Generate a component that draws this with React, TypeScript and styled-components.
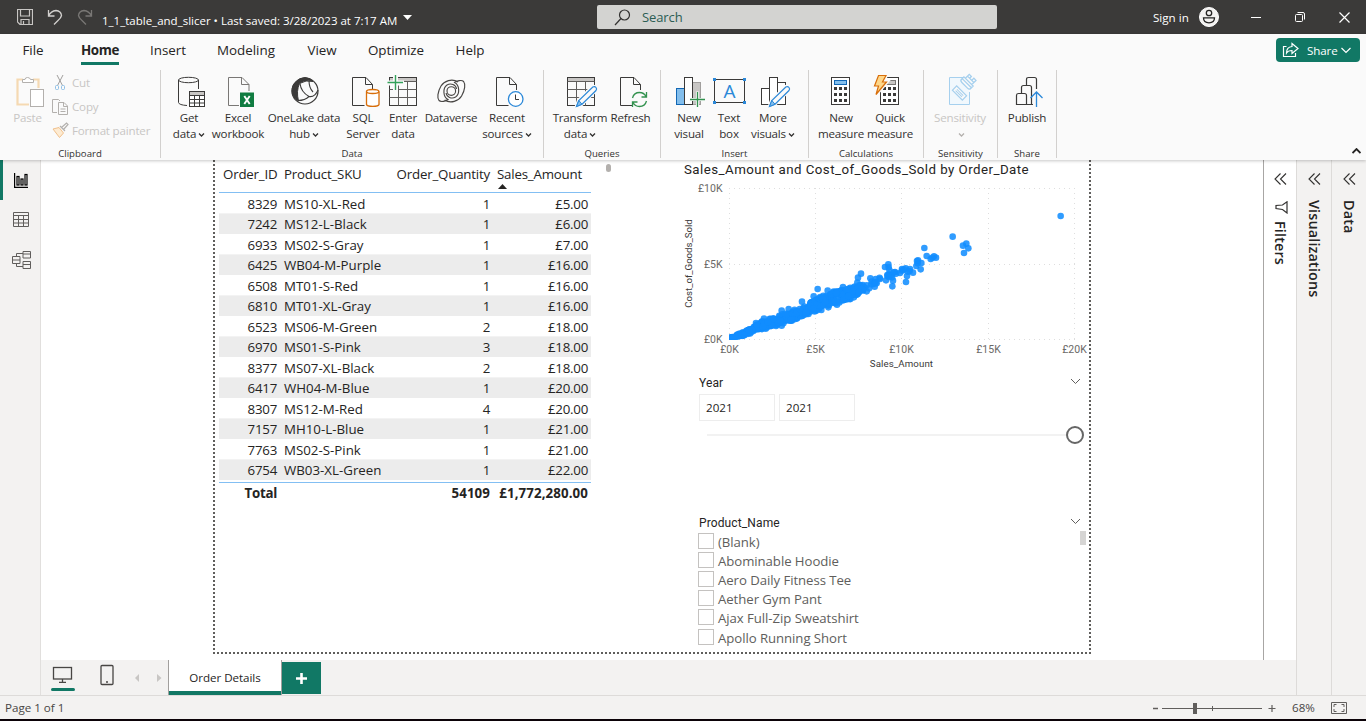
import React from "react";
import styled, { createGlobalStyle } from "styled-components";

const GlobalStyle = createGlobalStyle`
  * { box-sizing: border-box; }
  body { margin: 0; background: #fff; font-family: "Open Sans", "Noto Sans", sans-serif; color: #252423; overflow: hidden; }
`;

const green = "#117865";
const ink = "#3b3a39";

const Window = styled.div`
  display: flex;
  flex-direction: column;
  width: 1366px;
  height: 721px;
  border-bottom: 2px solid #0b0208;
  overflow: hidden;
`;

/* ---------- title bar ---------- */

const TitleBar = styled.header`
  display: flex;
  align-items: center;
  flex: none;
  height: 34px;
  background: #3b3a39;
  color: #fff;
`;

const QuickAccess = styled.div`
  display: flex;
  align-items: center;
  width: 597px;
  padding-left: 17px;
`;

const QuickIcon = styled.svg<{ $gap: number }>`
  width: 16px;
  height: 16px;
  margin-right: ${(p) => p.$gap}px;
  fill: none;
  flex: none;
`;

const FileName = styled.span`
  font-size: 11.5px;
  letter-spacing: 0;
  white-space: pre;
  padding-top: 6px;
`;

const CaretDown = styled.svg`
  width: 9px;
  height: 5px;
  margin-left: 6px;
  fill: #fff;
`;

const SearchBox = styled.div`
  display: flex;
  align-items: center;
  width: 400px;
  height: 24px;
  padding-left: 17px;
  border-radius: 2px;
  background: #d3d3d1;
  color: #2b5d54;
  font-size: 13px;
  letter-spacing: -0.1px;
  gap: 11px;
`;

const WindowControls = styled.div`
  display: flex;
  align-items: center;
  margin-left: 156px;
  font-size: 11.6px;
`;

const ControlIcon = styled.svg<{ $w: number; $ml: number }>`
  width: ${(p) => p.$w}px;
  height: ${(p) => p.$w}px;
  margin-left: ${(p) => p.$ml}px;
  fill: none;
  stroke: #fff;
`;

/* ---------- ribbon ---------- */

const Ribbon = styled.section`
  position: relative;
  z-index: 2;
  flex: none;
  height: 126px;
  background: #fafafa;
  box-shadow: 0 1px 3px rgba(0, 0, 0, 0.22);
`;

const TabRow = styled.nav`
  display: flex;
  height: 36px;
  padding-left: 22px;
`;

const RibbonTab = styled.div<{ $w: number; $active?: boolean }>`
  display: flex;
  justify-content: center;
  width: ${(p) => p.$w}px;
  font-size: 13.4px;
  line-height: 32px;
  font-weight: ${(p) => (p.$active ? 700 : 400)};
  letter-spacing: ${(p) => (p.$active ? "-0.35px" : "-0.03px")};

  span {
    height: 31px;
    border-bottom: ${(p) => (p.$active ? `3px solid ${green}` : "none")};
  }
`;

const ShareButton = styled.button`
  display: flex;
  align-items: center;
  width: 84px;
  height: 24px;
  margin: 4px 6px 0 auto;
  padding: 0 0 0 6px;
  border: 0;
  border-radius: 4px;
  background: ${green};
  color: #fff;
  font: 11.6px "Open Sans", sans-serif;
  letter-spacing: -0.1px;

  span { margin: 0 3px 0 6px; }
`;

const Groups = styled.div`
  display: flex;
  height: 88px;
`;

const Group = styled.div<{ $w: number }>`
  display: flex;
  flex-direction: column;
  align-items: center;
  width: ${(p) => p.$w}px;
  border-right: 1px solid #d2d0ce;
`;

const GroupItems = styled.div<{ $pad?: number }>`
  display: flex;
  flex: none;
  align-self: stretch;
  height: 77px;
  padding-left: ${(p) => p.$pad ?? 0}px;
`;

const GroupLabel = styled.div`
  flex: none;
  font-size: 9.6px;
  line-height: 13px;
  color: #323130;
`;

const BigButton = styled.div<{ $w: number; $muted?: boolean }>`
  display: flex;
  flex-direction: column;
  align-items: center;
  flex: none;
  width: ${(p) => p.$w}px;
  padding-top: 4px;
  font-size: 11.6px;
  line-height: 16px;
  letter-spacing: -0.2px;
  white-space: nowrap;
  color: ${(p) => (p.$muted ? "#c8c6c4" : "#323130")};
`;

const BigIcon = styled.svg`
  width: 34px;
  height: 36px;
  flex: none;
  fill: none;
  stroke: ${ink};
  overflow: visible;
`;

const MenuLine = styled.div`
  svg { margin-left: 2px; }
`;

const SmallStack = styled.div`
  display: flex;
  flex-direction: column;
`;

const SmallButton = styled.div`
  display: flex;
  align-items: center;
  gap: 3px;
  height: 24px;
  font-size: 11.6px;
  color: #c8c6c4;
  letter-spacing: -0.2px;
  white-space: nowrap;

  svg { width: 17px; height: 17px; fill: none; }
`;

const CollapseRibbon = styled.svg`
  position: absolute;
  right: 5px;
  bottom: 6px;
  width: 9px;
  height: 6px;
  fill: none;
  stroke: #252423;
  stroke-width: 1.8;
`;

/* ---------- body ---------- */

const Body = styled.div`
  display: flex;
  flex: 1;
  min-height: 0;
`;

const Rail = styled.aside`
  display: flex;
  flex-direction: column;
  width: 41px;
  background: #f3f2f1;
  border-right: 1px solid #e1dfdd;
`;

const RailItem = styled.div<{ $active?: boolean }>`
  display: flex;
  align-items: center;
  justify-content: center;
  height: 40px;
  border-left: 3px solid ${(p) => (p.$active ? green : "transparent")};
  padding: ${(p) => (p.$active ? "1px 1px 0 0" : "0 1px 1px 0")};
`;

const Center = styled.div`
  display: flex;
  flex-direction: column;
  width: 1255px;
`;

const Workspace = styled.div`
  display: flex;
  height: 500px;
`;

const CanvasArea = styled.div`
  width: 1222px;
  padding-left: 172px;
`;

const ReportPage = styled.main`
  display: flex;
  width: 878px;
  height: 494px;
  border: 2px dotted #605e5c;
  border-top: 0;
`;

const TableVisual = styled.div`
  display: flex;
  width: 465px;
  padding-left: 4px;
`;

const Table = styled.div`
  width: 372px;
  font-size: 13.3px;
`;

const rowHeight = { head: "33px", total: "22px", alt: "20.5px" };
const rowLine = { head: "29px", total: "20px", alt: "20px" };

const TableRow = styled.div<{ $kind?: "head" | "total" | "alt" }>`
  display: grid;
  grid-template-columns: 61px 114px 99px 98px;
  height: ${(p) => (p.$kind ? rowHeight[p.$kind] : "20.5px")};
  line-height: ${(p) => (p.$kind ? rowLine[p.$kind] : "22px")};
  background: ${(p) => (p.$kind === "alt" ? "#ececec" : "none")};
  box-shadow: ${(p) => (p.$kind === "alt" ? "0 -1px 0 #f3f3f3" : "none")};
  font-weight: ${(p) => (p.$kind === "total" ? 700 : 400)};
  letter-spacing: ${(p) => (p.$kind === "total" ? "0.1px" : p.$kind === "head" ? "-0.2px" : "0")};
  border-bottom: ${(p) => (p.$kind === "head" ? "1px solid #83bff3" : "0")};
  border-top: ${(p) => (p.$kind === "total" ? "1px solid #83bff3" : "0")};
  margin-top: ${(p) => (p.$kind === "total" ? "2px" : "0")};
`;

const Cell = styled.div<{ $right?: boolean; $tight?: boolean }>`
  position: relative;
  padding: 0 3px 0 4px;
  display: flex;
  justify-content: ${(p) => (p.$right ? "flex-end" : "flex-start")};
  white-space: nowrap;
  ${(p) => p.$tight && "letter-spacing: -0.25px;"}
`;

const SortMark = styled.svg`
  position: absolute;
  left: 5px;
  top: 24px;
  width: 9px;
  height: 5px;
  fill: #252423;
`;

const TableThumb = styled.div`
  width: 5px;
  height: 8px;
  margin: 4px 0 0 15px;
  border-radius: 3px;
  background: #b3b0ad;
`;

const RightVisuals = styled.div`
  display: flex;
  flex-direction: column;
  width: 409px;
`;

const ChartTitle = styled.h2`
  margin: 0;
  height: 18px;
  padding-left: 4px;
  font: 400 13.3px/20px Roboto, sans-serif;
  letter-spacing: 0.46px;
  white-space: nowrap;
  color: #252423;
`;

const Scatter = styled.svg`
  display: block;
  width: 409px;
  height: 192px;
  overflow: visible;

  text { font-family: Roboto, sans-serif; font-size: 10.5px; fill: #6b6967; }
  .axis { font-size: 9.7px; fill: #3b3a39; letter-spacing: 0.1px; }
  .axis.vertical { letter-spacing: -0.05px; }
`;

const Slicer = styled.section<{ $h: number }>`
  height: ${(p) => p.$h}px;
  padding: 5px 8px 0 19px;
`;

const SlicerHead = styled.div`
  display: flex;
  align-items: center;
  justify-content: space-between;
  height: 16px;
  font: 400 12px/16px Roboto, sans-serif;
  letter-spacing: 0.12px;
  color: #252423;

  svg { margin-bottom: 3px; }
`;

const YearInputs = styled.div`
  display: flex;
  gap: 4px;
  margin: 3px 0 0 0;
`;

const YearInput = styled.div`
  width: 76px;
  height: 27px;
  padding-left: 6px;
  border: 1px solid #ededed;
  font-size: 11.6px;
  line-height: 25px;
`;

const SliderTrack = styled.div`
  display: flex;
  align-items: center;
  height: 19px;
  margin: 4px -3px 0 8px;

  i { flex: 1; height: 2px; background: #f2f2f2; }
  b { width: 18px; height: 18px; border: 2px solid #666; border-radius: 50%; background: #fff; }
`;

const ItemList = styled.div`
  display: flex;
  justify-content: space-between;
  margin-right: -5px;
`;

const ListItem = styled.div`
  display: flex;
  align-items: center;
  gap: 4px;
  height: 19.2px;
  margin: 1px 0 -1px -1px;
  font-size: 13.2px;
  line-height: 22px;
  letter-spacing: -0.06px;
  color: #605e5c;
  white-space: nowrap;

  &::before { content: ""; width: 14px; height: 14px; border: 1px solid #c4c2c0; margin-bottom: 2px; }
`;

const ListThumb = styled.div`
  width: 6px;
  height: 14px;
  background: #d6d5d4;
`;

const SidePane = styled.div<{ $w: number; $white?: boolean }>`
  display: flex;
  flex-direction: column;
  align-items: center;
  width: ${(p) => p.$w}px;
  padding-top: 13px;
  background: ${(p) => (p.$white ? "#fff" : "#f3f2f1")};
  border-left: 1px solid ${(p) => (p.$white ? "#a8a6a4" : "#dddbd9")};
`;

const VerticalTitle = styled.div<{ $mt: number }>`
  writing-mode: vertical-rl;
  margin: ${(p) => p.$mt}px 1px 0 0;
  font-size: 14.4px;
  font-weight: 600;
  line-height: 18px;
  letter-spacing: 0.15px;
`;

const FilterIcon = styled.svg`
  width: 13px;
  height: 13px;
  flex: none;
  margin: 16px 0 0 3px;
  fill: none;
  stroke: #323130;
  stroke-width: 1.2;
`;

const PageBar = styled.div`
  display: flex;
  height: 35px;
  background: #f3f2f1;
`;

const ViewSwitch = styled.div`
  display: flex;
  width: 127px;
`;

const PageTab = styled.div`
  width: 114px;
  height: 35px;
  border: solid #a19f9d;
  border-width: 0 1px;
  background: #fff;
  box-shadow: inset 0 -4px 0 ${green};
  text-align: center;
  font-size: 11.6px;
  line-height: 35px;
  letter-spacing: -0.05px;
`;

const AddPage = styled.div`
  display: flex;
  align-items: center;
  justify-content: center;
  width: 39px;
  height: 32px;
  margin-top: 2px;
  background: ${green};
`;

const StatusBar = styled.footer`
  display: flex;
  align-items: center;
  flex: none;
  height: 24px;
  padding: 0 19px 0 5px;
  border-top: 1px solid #dddbd9;
  background: #f3f2f1;
  font-size: 11.6px;
  color: #484644;
`;

const Zoom = styled.svg`
  width: 126px;
  height: 16px;
  margin-left: auto;
`;

const ZoomValue = styled.span`
  width: 55px;
  padding-left: 16px;
`;

/* ---------- drawings ---------- */

const Doc = () => <path d="M6.5 3.5H20L26.5 10.5V16M6.5 3.5V31.5H18.5M19.5 3.5V10.5H26.5" />;

const Grid = ({ x = 4.5 }: { x?: number }) => (
  <g>
    <rect x={x} y={3.5} width={27} height={28} />
    <rect x={x + 0.5} y={4} width={26} height={3} fill="#c8c6c4" stroke="none" />
    <path d={`M${x} 7.5h27M${x} 15.5h27M${x} 23.5h27M${x + 9} 7.5v24M${x + 18} 7.5v24`} stroke="#605e5c" />
  </g>
);

const Pencil = () => (
  <g>
    <path d="M13 33L15.5 26L29.5 12.5Q32 11.5 33.5 14T32.5 17L19 30.5Z" fill="#fafafa" stroke="#fafafa" strokeWidth={3} />
    <path d="M13.5 32.5L15.8 26.5L29.8 13Q31.8 12 33 13.5T33 16.5L19 30.2Z" fill="#fafafa" stroke="#2b88d8" strokeWidth={1.2} />
    <path d="M13.5 32.5L15.8 26.5L19 30.2Z" fill="#83beec" stroke="#2b88d8" />
  </g>
);

const Keys = () => (
  <g fill={ink} stroke="none">
    {[13, 19, 25].map((y) => [10, 15, 20].map((x) => <rect key={`${x}-${y}`} x={x} y={y} width={3} height={3} />))}
  </g>
);

const icons: Record<string, React.ReactNode> = {
  getData: (
    <>
      <ellipse cx={16.5} cy={6} rx={10} ry={2.7} />
      <path d="M6.5 6V28.5Q7 31 15 31.5M26.5 6V15" />
      <rect x={17.5} y={17.5} width={15} height={15} fill="#fff" />
      <rect x={18} y={18} width={14} height={3} fill="#c8c6c4" stroke="none" />
      <path d="M17.5 21.5h15M17.5 25.5h15M17.5 29h15M22.5 21v11M27.5 21v11" />
    </>
  ),
  excel: (
    <>
      <path d="M7.5 3.5H21L28 10.5V17M7.5 3.5V31.5H18M20.5 3.5V10.5H28" stroke="#797775" />
      <rect x={19} y={18.5} width={14} height={14.5} fill="#107c41" stroke="none" />
      <path d="M23.3 22L28.7 30M28.7 22L23.3 30" stroke="#fff" strokeWidth={1.9} />
    </>
  ),
  oneLake: (
    <>
      <circle cx={18} cy={17} r={13} strokeWidth={1.2} />
      <path d="M9.5 7.5Q12 4 18 3.5Q24 4 26 7.5Q19 5.5 12.5 9.5Q9 17 11.5 27Q5 23 5 17Q5 11 9.5 7.5Z" fill={ink} />
      <path d="M13 9.5Q14 18 22 22.5Q28 23.5 31 16M22 6.5Q22 14 26 18M22 22.5Q18 26.5 11 26.5" strokeWidth={1.1} />
    </>
  ),
  sql: (
    <>
      <Doc />
      <path d="M20.5 17.5V30.5C21 33 32.5 33 33 30.5V17.5" fill="#fff" stroke="#d86e0a" strokeWidth={1.3} />
      <ellipse cx={26.7} cy={17.5} rx={6.2} ry={2} fill="#fff" stroke="#d86e0a" strokeWidth={1.3} />
    </>
  ),
  enter: (
    <>
      <Grid x={3.5} />
      <path d="M0 9H18M9.5 0V17" stroke="#fafafa" strokeWidth={5} />
      <path d="M1.5 8.5H17M9.5 1V16" stroke="#33a15a" strokeWidth={1.4} />
    </>
  ),
  dataverse: (
    <g strokeWidth={1.15} stroke="#484644">
      <circle cx={17.3} cy={17} r={4.3} />
      <path d="M24 8C18 4 10 7 7 12C3.5 18 3 24 5 26.5C7 28.5 12 27 14 25.5C9 23 8.5 14 13 11C17 8.5 22 11 22.5 15" />
      <path d="M10.6 26C16.6 30 24.6 27 27.6 22C31.1 16 31.6 10 29.6 7.5C27.6 5.5 22.6 7 20.6 8.5C25.6 11 26.1 20 21.6 23C17.6 25.5 12.6 23 12.1 19" />
    </g>
  ),
  recent: (
    <>
      <Doc />
      <circle cx={25.7} cy={25} r={7.3} fill="#fff" stroke="#2b88d8" strokeWidth={1.3} />
      <path d="M25.5 20.5V25.5H29" />
    </>
  ),
  transform: (
    <>
      <Grid />
      <Pencil />
    </>
  ),
  refresh: (
    <>
      <Doc />
      <circle cx={25.5} cy={25.5} r={9} fill="#fafafa" stroke="none" />
      <path d="M18.5 24Q20 18.5 25.5 18.5Q30 18.5 32 22.5M32.5 18V23H27.5M32.5 27Q31 32.5 25.5 32.5Q21 32.5 19 28.5M18.5 33V28H23.5" stroke="#33924f" strokeWidth={1.3} />
    </>
  ),
  newVisual: (
    <>
      <rect x={4.5} y={14.5} width={8} height={16} fill="#83beec" stroke="#1267b4" />
      <rect x={20.5} y={8.5} width={8} height={22} fill="#c8c6c4" stroke="#a19f9d" />
      <rect x={12.5} y={3.5} width={8} height={27} fill="#fff" />
      <path d="M17.5 25.5H33.5M25.5 17.5V33.5" stroke="#fafafa" strokeWidth={3} />
      <path d="M18 25.5H33M25.5 18V33" stroke="#33924f" strokeWidth={1.3} />
    </>
  ),
  textBox: (
    <>
      <rect x={2.5} y={5.5} width={30} height={23} />
      <g fill="#2b88d8" stroke="none">
        <rect x={1} y={4} width={3} height={3} />
        <rect x={31} y={4} width={3} height={3} />
        <rect x={1} y={27} width={3} height={3} />
        <rect x={31} y={27} width={3} height={3} />
      </g>
      <text x={17.5} y={24} textAnchor="middle" fontSize={19} fill="#2b88d8" stroke="none">A</text>
    </>
  ),
  moreVisuals: (
    <>
      <rect x={5.5} y={14.5} width={8} height={16} fill="#fff" />
      <rect x={21.5} y={8.5} width={8} height={22} fill="#fff" />
      <rect x={13.5} y={3.5} width={8} height={27} fill="#fff" />
      <Pencil />
    </>
  ),
  newMeasure: (
    <>
      <rect x={7.5} y={3.5} width={18} height={27} fill="#fff" />
      <rect x={10.5} y={6.5} width={12} height={4} fill="#83beec" stroke="#1267b4" />
      <Keys />
    </>
  ),
  quickMeasure: (
    <>
      <rect x={7.5} y={3.5} width={18} height={27} fill="#fff" />
      <rect x={10.5} y={6.5} width={12} height={4} fill="#c8c6c4" stroke="#797775" />
      <Keys />
      <path d="M5.5 1.5H13L9.5 8H13.5L3 20.5L5.5 12H1.5Z" fill="#fed78a" stroke="#fafafa" strokeWidth={4} />
      <path d="M5.5 1.5H13L9.5 8H13.5L3 20.5L5.5 12H1.5Z" fill="#fed78a" stroke="#d86e0a" strokeWidth={1.2} />
    </>
  ),
  sensitivity: (
    <g stroke="#a6d0ee">
      <path d="M20 3.5H6.5V30.5H26.5V18" fill="#f1f8fd" />
      <g transform="translate(24.5 8.5) rotate(45)">
        <path d="M-6.5 -1.5H6.5V2Q6.5 4 4 4H-4Q-6.5 4 -6.5 2ZM-4.5 -4.5H4.5V-1.5M-4.5 -1.5V-7H-1.5V-4.5M1.5 -4.5V-7.5H4.5V-4.5M-6.5 1H6.5" fill="#fafafa" strokeWidth={1.3} />
      </g>
      <g transform="translate(16.5 19) rotate(45)">
        <rect x={-7} y={-3} width={14} height={6} fill="#fafafa" strokeWidth={1.2} />
        <path d="M-4.5 -0.8H4.5M-4.5 1H4.5" />
      </g>
    </g>
  ),
  publish: (
    <>
      <path d="M16.5 11V5.5Q16.5 3.5 18.5 3.5H24.5Q26.5 3.5 26.5 5.5V15M11.5 19V13.5Q11.5 11.5 13.5 11.5H19.5Q21.5 11.5 21.5 13.5V30.5M6.5 30.5V21.5Q6.5 19.5 8.5 19.5H14.5Q16.5 19.5 16.5 21.5V30.5ZM16.5 30.5H23" strokeWidth={1.2} />
      <path d="M26.5 33V18M20.5 24L26.5 18L32.5 24" stroke="#2b88d8" strokeWidth={1.3} />
    </>
  ),
};

const Chevron = ({ color = "#323130" }: { color?: string }) => (
  <svg width="7" height="6" viewBox="0 0 7 6" fill="none" stroke={color} strokeWidth="1.3">
    <path d="M1 1.5L3.5 4L6 1.5" />
  </svg>
);

const ThinChevron = () => (
  <svg width="11" height="7" viewBox="0 0 11 7" fill="none" stroke="#605e5c">
    <path d="M1 1L5.5 5.5L10 1" />
  </svg>
);

const DoubleChevron = () => (
  <svg width="13" height="12" viewBox="0 0 13 12" fill="none" stroke="#323130" strokeWidth="1.1">
    <path d="M6.5 0.5L1 6L6.5 11.5M12 0.5L6.5 6L12 11.5" />
  </svg>
);

/* ---------- data ---------- */

type Item = { icon: string; w: number; lines: string[]; menu?: boolean; muted?: boolean };
const groups: { label: string; w: number; pad: number; items: Item[] }[] = [
  {
    label: "Data", w: 383, pad: 10,
    items: [
      { icon: "getData", w: 36, lines: ["Get", "data"], menu: true },
      { icon: "excel", w: 62, lines: ["Excel", "workbook"] },
      { icon: "oneLake", w: 70, lines: ["OneLake data", "hub"], menu: true },
      { icon: "sql", w: 48, lines: ["SQL", "Server"] },
      { icon: "enter", w: 32, lines: ["Enter", "data"] },
      { icon: "dataverse", w: 64, lines: ["Dataverse"] },
      { icon: "recent", w: 48, lines: ["Recent", "sources"], menu: true },
    ],
  },
  {
    label: "Queries", w: 117, pad: 8,
    items: [
      { icon: "transform", w: 56, lines: ["Transform", "data"], menu: true },
      { icon: "refresh", w: 45, lines: ["Refresh"] },
    ],
  },
  {
    label: "Insert", w: 148, pad: 6,
    items: [
      { icon: "newVisual", w: 44, lines: ["New", "visual"] },
      { icon: "textBox", w: 36, lines: ["Text", "box"] },
      { icon: "moreVisuals", w: 52, lines: ["More", "visuals"], menu: true },
    ],
  },
  {
    label: "Calculations", w: 115, pad: 8,
    items: [
      { icon: "newMeasure", w: 48, lines: ["New", "measure"] },
      { icon: "quickMeasure", w: 50, lines: ["Quick", "measure"] },
    ],
  },
  { label: "Sensitivity", w: 74, pad: 0, items: [{ icon: "sensitivity", w: 72, lines: ["Sensitivity", ""], menu: true, muted: true }] },
  { label: "Share", w: 59, pad: 0, items: [{ icon: "publish", w: 58, lines: ["Publish"] }] },
];

const rows = [
  ["8329", "MS10-XL-Red", "1", "£5.00"],
  ["7242", "MS12-L-Black", "1", "£6.00"],
  ["6933", "MS02-S-Gray", "1", "£7.00"],
  ["6425", "WB04-M-Purple", "1", "£16.00"],
  ["6508", "MT01-S-Red", "1", "£16.00"],
  ["6810", "MT01-XL-Gray", "1", "£16.00"],
  ["6523", "MS06-M-Green", "2", "£18.00"],
  ["6970", "MS01-S-Pink", "3", "£18.00"],
  ["8377", "MS07-XL-Black", "2", "£18.00"],
  ["6417", "WH04-M-Blue", "1", "£20.00"],
  ["8307", "MS12-M-Red", "4", "£20.00"],
  ["7157", "MH10-L-Blue", "1", "£21.00"],
  ["7763", "MS02-S-Pink", "1", "£21.00"],
  ["6754", "WB03-XL-Green", "1", "£22.00"],
];

const products = ["(Blank)", "Abominable Hoodie", "Aero Daily Fitness Tee", "Aether Gym Pant", "Ajax Full-Zip Sweatshirt", "Apollo Running Short"];

/* Points are kept in thirds of a pixel, measured from the chart's top-left corner. */
const points: [number, number][] = [
  [228, 489], [252, 476], [305, 452], [326, 447], [366, 425], [396, 432], [413, 387], [401, 409], [424, 450], [305, 497],
  [288, 498], [257, 506], [351, 475], [445, 442], [443, 392], [489, 381], [471, 434], [508, 417], [534, 353], [543, 341],
  [532, 368], [560, 394], [548, 375], [571, 355], [584, 380], [600, 357], [618, 361], [615, 321], [625, 313], [637, 379],
  [639, 362], [628, 330], [645, 336], [660, 339], [666, 327], [677, 325], [690, 327], [699, 338], [681, 348], [678, 366],
  [684, 335], [709, 318], [711, 303], [722, 328], [724, 309], [713, 310], [733, 264], [740, 288], [752, 297], [762, 289],
  [768, 293], [757, 293], [818, 230], [849, 257], [859, 251], [865, 265], [852, 279], [1142, 168], [622, 345], [634, 345],
  [154, 535], [162, 532], [172, 529], [182, 525], [626, 322], [636, 352], [714, 301], [590, 370], [560, 376], [575, 365],
  [666, 332], [672, 329], [689, 333], [580, 372], [574, 373],
];

const band: [number, number, number][] = [
  [150, 534, 537], [200, 510, 525], [250, 482, 506], [300, 464, 493], [350, 446, 478], [400, 424, 457],
  [440, 398, 438], [500, 386, 424], [540, 375, 402], [580, 360, 378], [620, 340, 356], [650, 332, 342],
];

let seed = 11;
const random = () => {
  seed = (seed * 16807) % 2147483647;
  return seed / 2147483647;
};

for (let n = 0; n < 400; n++) {
  const x = 152 + Math.pow(random(), 1.05) * (n % 6 ? 400 : 496);
  const at = band.findIndex((b) => b[0] > x);
  const [a, b] = [band[at - 1], band[at]];
  const t = (x - a[0]) / (b[0] - a[0]);
  const top = a[1] + (b[1] - a[1]) * t;
  const bottom = a[2] + (b[2] - a[2]) * t;
  points.push([x, top + (bottom - top) * random()]);
}

const gridX = [49.5, 135.5, 221.5, 308.5, 394.5];
const gridY = [10.5, 86.5, 161.5];

const ScatterChart = () => (
  <Scatter viewBox="0 0 409 192">
    <defs>
      <clipPath id="plot"><rect x={49} y={0} width={360} height={161.5} /></clipPath>
    </defs>
    <g stroke="#dedede" strokeDasharray="1 4">
      {gridX.map((x) => <path key={x} d={`M${x} 10V162`} />)}
      {gridY.map((y) => <path key={y} d={`M49 ${y}H395`} />)}
    </g>
    <g clipPath="url(#plot)" fill="#118dff" fillOpacity={0.87}>
      {points.map(([x, y], i) => <circle key={i} cx={x / 3} cy={y / 3 - 18} r={3.3} />)}
    </g>
    {["£10K", "£5K", "£0K"].map((t, i) => <text key={t} x={42.5} y={gridY[i] + 3.5} textAnchor="end">{t}</text>)}
    {["£0K", "£5K", "£10K", "£15K", "£20K"].map((t, i) => <text key={t} x={gridX[i]} y={175} textAnchor="middle">{t}</text>)}
    <text className="axis" x={221.5} y={189} textAnchor="middle">Sales_Amount</text>
    <text className="axis vertical" transform="translate(12 85.5) rotate(-90)" textAnchor="middle">Cost_of_Goods_Sold</text>
  </Scatter>
);

export default function App() {
  return (
    <Window>
      <GlobalStyle />
      <TitleBar>
        <QuickAccess>
          <QuickIcon $gap={14} viewBox="0 0 16 16" stroke="#c8c6c4" strokeWidth={1.2}>
            <path d="M0.5 0.5H15.5V15.5H3L0.5 13ZM3.5 0.5V7H12.5V0.5M4 15V10.5H12V15M6.5 12V15" />
          </QuickIcon>
          <QuickIcon $gap={14} viewBox="0 0 16 16" stroke="#d2d0ce" strokeWidth={1.3}>
            <path d="M1.5 1V7H7.5M1.5 7Q4 2 9 1.5Q14 2 14.5 6.5Q14 9 11 11.5L7 15.5" />
          </QuickIcon>
          <QuickIcon $gap={9} viewBox="0 0 16 16" stroke="#797775" strokeWidth={1.3}>
            <path d="M14.5 1V7H8.5M14.5 7Q12 2 7 1.5Q2 2 1.5 6.5Q2 9 5 11.5L9 15.5" />
          </QuickIcon>
          <FileName>1_1_table_and_slicer • Last saved: 3/28/2023 at 7:17 AM</FileName>
          <CaretDown viewBox="0 0 9 5"><path d="M0 0H9L4.5 5Z" /></CaretDown>
        </QuickAccess>
        <SearchBox>
          <svg width="17" height="17" viewBox="0 0 17 17" fill="none" stroke="#323130" strokeWidth="1.2">
            <circle cx="10.5" cy="6" r="5" />
            <path d="M7 9.5L1 16" />
          </svg>
          Search
        </SearchBox>
        <WindowControls>
          Sign in
          <ControlIcon $w={20} $ml={10} viewBox="0 0 20 20">
            <circle cx="10" cy="10" r="9.5" fill="#f3f2f1" />
            <circle cx="10" cy="6" r="2.7" stroke="#252423" strokeWidth="1.3" />
            <path d="M4.5 10.8H15.5Q15.5 15.8 10 15.8T4.5 10.8Z" stroke="#252423" strokeWidth="1.3" />
          </ControlIcon>
          <ControlIcon $w={10} $ml={32} viewBox="0 0 10 10"><path d="M0 5.5H10" /></ControlIcon>
          <ControlIcon $w={10} $ml={34} viewBox="0 0 10 10">
            <rect x="0.5" y="2.5" width="7" height="7" rx="1" />
            <path d="M2.5 0.5H8Q9.5 0.5 9.5 2V7.5" />
          </ControlIcon>
          <ControlIcon $w={11} $ml={34} viewBox="0 0 11 11"><path d="M0.5 0.5L10.5 10.5M10.5 0.5L0.5 10.5" strokeWidth="1.2" /></ControlIcon>
        </WindowControls>
      </TitleBar>

      <Ribbon>
        <TabRow>
          <RibbonTab $w={22}><span>File</span></RibbonTab>
          <RibbonTab $w={112} $active><span>Home</span></RibbonTab>
          <RibbonTab $w={24}><span>Insert</span></RibbonTab>
          <RibbonTab $w={132}><span>Modeling</span></RibbonTab>
          <RibbonTab $w={20}><span>View</span></RibbonTab>
          <RibbonTab $w={128}><span>Optimize</span></RibbonTab>
          <RibbonTab $w={20}><span>Help</span></RibbonTab>
          <ShareButton>
            <svg width="19" height="16" viewBox="0 0 19 16" fill="none" stroke="#fff" strokeWidth="1.2">
              <path d="M4.5 4.5H1.5V14.5H13.5V11M10 1.5L16 6.5L10 11.5V8.5Q6 8.5 4.5 11Q4.5 5 10 4.5Z" />
            </svg>
            <span>Share</span>
            <svg width="10" height="7" viewBox="0 0 10 7" fill="none" stroke="#fff" strokeWidth="1.2"><path d="M0.5 1L5 5.5L9.5 1" /></svg>
          </ShareButton>
        </TabRow>
        <Groups>
          <Group $w={161}>
            <GroupItems $pad={3}>
              <BigButton $w={49} $muted>
                <BigIcon viewBox="0 0 34 36">
                  <path d="M12 5.5H6.5V30.5H18M22 5.5H27.5V14" stroke="#f5d9b2" strokeWidth={2.2} />
                  <path d="M11.5 8.5V5.5H14Q14 3.5 16.5 3.5T19.5 5.5H22.5V8.5Z" fill="#fff" stroke="#b3b0ad" />
                  <rect x={19.5} y={15.5} width={13} height={17} fill="#fff" stroke="#b3b0ad" />
                </BigIcon>
                Paste
              </BigButton>
              <SmallStack>
                <SmallButton>
                  <svg viewBox="0 0 17 17">
                    <path d="M5 1L10.5 11.5M11 1L5.5 11.5" stroke="#a19f9d" />
                    <rect x="3.5" y="11.5" width="3" height="4" rx="1" stroke="#8fc0e6" />
                    <rect x="9.5" y="11.5" width="3" height="4" rx="1" stroke="#8fc0e6" />
                  </svg>
                  Cut
                </SmallButton>
                <SmallButton>
                  <svg viewBox="0 0 17 17" stroke="#b3b0ad">
                    <path d="M5 14.5H0.5V1.5H6.5L8 3M6.5 4.5H12L15.5 8V16.5H6.5ZM11.5 4.5V8.5H15.5M8.5 11H13.5M8.5 13.5H13.5" />
                  </svg>
                  Copy
                </SmallButton>
                <SmallButton>
                  <svg viewBox="0 0 17 17">
                    <path d="M1 7L7 5.5L11.5 11L7.5 15.5Z" fill="#fdebd2" stroke="#f0c08c" />
                    <path d="M8 4L13 9M9.5 5.5L14.5 1L16 2.5L11.5 7.5" stroke="#b3b0ad" strokeWidth="1.2" />
                  </svg>
                  Format painter
                </SmallButton>
              </SmallStack>
            </GroupItems>
            <GroupLabel>Clipboard</GroupLabel>
          </Group>
          {groups.map((g) => (
            <Group key={g.label} $w={g.w}>
              <GroupItems $pad={g.pad}>
                {g.items.map((it) => (
                  <BigButton key={it.icon} $w={it.w} $muted={it.muted}>
                    <BigIcon viewBox="0 0 34 36">{icons[it.icon]}</BigIcon>
                    {it.lines.map((line, i) => (
                      <MenuLine key={i}>
                        {line}
                        {it.menu && i === 1 && <Chevron color={it.muted ? "#b3b0ad" : undefined} />}
                      </MenuLine>
                    ))}
                  </BigButton>
                ))}
              </GroupItems>
              <GroupLabel>{g.label}</GroupLabel>
            </Group>
          ))}
        </Groups>
        <CollapseRibbon viewBox="0 0 9 6"><path d="M0.5 5L4.5 1L8.5 5" /></CollapseRibbon>
      </Ribbon>

      <Body>
        <Rail>
          <RailItem $active>
            <svg width="15" height="15" viewBox="0 0 15 15" fill="none" stroke="#000" strokeWidth="1.2">
              <path d="M0.6 0V14.4H14" />
              <rect x="3" y="3.5" width="2" height="8.5" />
              <rect x="7" y="6" width="2" height="6" />
              <rect x="11" y="1.5" width="2" height="10.5" />
            </svg>
          </RailItem>
          <RailItem>
            <svg width="16" height="15" viewBox="0 0 16 15" fill="none" stroke="#605e5c">
              <path d="M0.5 0.5H15.5V14.5H0.5ZM0.5 3.5H15.5M0.5 7.5H15.5M0.5 11H15.5M5.5 3.5V14.5M10.5 3.5V14.5" />
            </svg>
          </RailItem>
          <RailItem>
            <svg width="19" height="18" viewBox="0 0 19 18" fill="none" stroke="#605e5c">
              <path d="M0.5 5.5H8V12.5H0.5ZM0.5 9H8M11 0.5H18.5V7H11ZM11 3H18.5M11 10.5H18.5V17.5H11ZM11 13.5H18.5M4.5 5.5V2.5H11M4.5 12.5V15.5H11" />
            </svg>
          </RailItem>
        </Rail>

        <Center>
          <Workspace>
            <CanvasArea>
              <ReportPage>
                <TableVisual>
                  <Table>
                    <TableRow $kind="head">
                      <Cell>Order_ID</Cell>
                      <Cell>Product_SKU</Cell>
                      <Cell $right>Order_Quantity</Cell>
                      <Cell>Sales_Amount<SortMark viewBox="0 0 9 5"><path d="M0 5H9L4.5 0Z" /></SortMark></Cell>
                    </TableRow>
                    {rows.map((r, i) => (
                      <TableRow key={r[0]} $kind={i % 2 ? "alt" : undefined}>
                        <Cell $right $tight>{r[0]}</Cell>
                        <Cell>{r[1]}</Cell>
                        <Cell $right $tight>{r[2]}</Cell>
                        <Cell $right $tight>{r[3]}</Cell>
                      </TableRow>
                    ))}
                    <TableRow $kind="total">
                      <Cell $right $tight>Total</Cell>
                      <Cell />
                      <Cell $right>54109</Cell>
                      <Cell $right>£1,772,280.00</Cell>
                    </TableRow>
                  </Table>
                  <TableThumb />
                </TableVisual>
                <RightVisuals>
                  <ChartTitle>Sales_Amount and Cost_of_Goods_Sold by Order_Date</ChartTitle>
                  <ScatterChart />
                  <Slicer $h={140}>
                    <SlicerHead>Year<ThinChevron /></SlicerHead>
                    <YearInputs>
                      <YearInput>2021</YearInput>
                      <YearInput>2021</YearInput>
                    </YearInputs>
                    <SliderTrack><i /><b /></SliderTrack>
                  </Slicer>
                  <Slicer $h={142}>
                    <SlicerHead>Product_Name<ThinChevron /></SlicerHead>
                    <ItemList>
                      <div>{products.map((p) => <ListItem key={p}>{p}</ListItem>)}</div>
                      <ListThumb />
                    </ItemList>
                  </Slicer>
                </RightVisuals>
              </ReportPage>
            </CanvasArea>
            <SidePane $w={33} $white>
              <DoubleChevron />
              <FilterIcon viewBox="0 0 13 13">
                <path d="M12 0.8V12L7.5 8.5L1 7.5V4.5L7.5 4Z" />
              </FilterIcon>
              <VerticalTitle $mt={7}>Filters</VerticalTitle>
            </SidePane>
          </Workspace>
          <PageBar>
            <ViewSwitch>
              <svg width="127" height="35" viewBox="0 0 127 35" fill="none" stroke="#484644" strokeWidth="1.3">
                <rect x="12.5" y="7.5" width="18" height="11.5" />
                <path d="M21.5 19V22M18 22.3H25" />
                <rect x="10" y="28" width="24" height="3" rx="1.5" fill={green} stroke="none" />
                <rect x="60" y="5.5" width="12" height="19" rx="1" />
                <path d="M65 22H67" strokeWidth="1.5" />
                <path d="M98 14V22L94 18ZM116 14V22L120.5 18Z" fill="#c8c6c4" stroke="none" />
              </svg>
            </ViewSwitch>
            <PageTab>Order Details</PageTab>
            <AddPage>
              <svg width="11" height="11" viewBox="0 0 11 11" stroke="#fff" strokeWidth="2.6"><path d="M5.5 0V11M0 5.5H11" /></svg>
            </AddPage>
          </PageBar>
        </Center>

        <SidePane $w={35}>
          <DoubleChevron />
          <VerticalTitle $mt={15}>Visualizations</VerticalTitle>
        </SidePane>
        <SidePane $w={35}>
          <DoubleChevron />
          <VerticalTitle $mt={15}>Data</VerticalTitle>
        </SidePane>
      </Body>

      <StatusBar>
        Page 1 of 1
        <Zoom viewBox="0 0 126 16" stroke="#605e5c">
          <path d="M3 8.5H8" strokeWidth={1.5} />
          <path d="M12 8.5H112M62.5 6V11" />
          <rect x={43} y={3} width={4} height={11} fill="#605e5c" stroke="none" />
          <path d="M118.5 8.5H125.5M122 5V12" strokeWidth={1.2} />
        </Zoom>
        <ZoomValue>68%</ZoomValue>
        <svg width="16" height="12" viewBox="0 0 16 12" fill="none" stroke="#605e5c">
          <path d="M0.5 0.5H15.5V11.5H0.5ZM3 5V2.5H5.5M10.5 2.5H13V5M13 7V9.5H10.5M5.5 9.5H3V7" />
        </svg>
      </StatusBar>
    </Window>
  );
}
